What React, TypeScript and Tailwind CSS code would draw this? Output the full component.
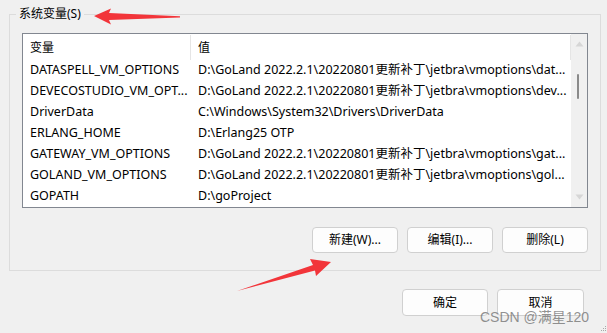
import React from "react";

const rows: [string, string][] = [
  ["DATASPELL_VM_OPTIONS", "D:\\GoLand 2022.2.1\\20220801更新补丁\\jetbra\\vmoptions\\dat..."],
  ["DEVECOSTUDIO_VM_OPT...", "D:\\GoLand 2022.2.1\\20220801更新补丁\\jetbra\\vmoptions\\dev..."],
  ["DriverData", "C:\\Windows\\System32\\Drivers\\DriverData"],
  ["ERLANG_HOME", "D:\\Erlang25 OTP"],
  ["GATEWAY_VM_OPTIONS", "D:\\GoLand 2022.2.1\\20220801更新补丁\\jetbra\\vmoptions\\gat..."],
  ["GOLAND_VM_OPTIONS", "D:\\GoLand 2022.2.1\\20220801更新补丁\\jetbra\\vmoptions\\gol..."],
  ["GOPATH", "D:\\goProject"],
];

function Btn({ label, w = "w-[86px]", h = "h-[26px]" }: { label: string; w?: string; h?: string }) {
  return (
    <div
      className={`${w} ${h} flex items-center justify-center rounded-[4px] border border-[#d0d0d0] bg-[#fdfdfd] text-[12px] text-black`}
    >
      {label}
    </div>
  );
}

export default function App() {
  return (
    <div
      className="relative w-[607px] h-[333px] overflow-hidden bg-[#f0f0f0] text-[12px] text-black"
      style={{ fontFamily: '"Noto Sans", "Noto Sans CJK SC", sans-serif' }}
    >
      <div className="pl-[9px] pt-[14px]">
        {/* group box */}
        <div className="relative w-[592px] h-[257px] border border-[#dcdcdc] pl-[12px] pr-[12px] pt-[18px]">
          <div className="absolute left-[6px] top-[-9px] bg-[#f0f0f0] px-[3px] leading-[16px] text-[12px]">
            系统变量(S)
          </div>
          {/* list box */}
          <div className="w-[566px] h-[175px] border border-[#828790] bg-white flex">
            <div className="flex-1 min-w-0 flex flex-col text-[12.5px] pt-[1px] overflow-hidden">
              <div className="h-[25px] flex items-center shrink-0 text-[12px]">
                <div className="w-[168px] pl-[7px] h-full flex items-center border-r border-[#e5e5e5]">变量</div>
                <div className="flex-1 pl-[7px] h-full flex items-center border-r border-[#e5e5e5]">值</div>
              </div>
              {rows.map(([k, v]) => (
                <div key={k} className="h-[21px] flex items-center shrink-0 whitespace-nowrap">
                  <div className="w-[168px] pl-[7px] overflow-hidden">{k}</div>
                  <div className="flex-1 pl-[7px] overflow-hidden">{v}</div>
                </div>
              ))}
            </div>
            {/* scrollbar */}
            <div className="w-[16px] h-full bg-[#f0f0f0] flex flex-col items-center justify-between py-[7px]">
              <svg width="9" height="6" viewBox="0 0 9 6">
                <polygon points="4.5,0.5 8.5,5.5 0.5,5.5" fill="#d6d6d6" />
              </svg>
              <div className="flex-1 w-full relative">
                <div className="absolute left-[6px] top-[27px] w-[2px] h-[25px] bg-[#8a8a8a] rounded-[1px]" />
              </div>
              <svg width="9" height="6" viewBox="0 0 9 6">
                <polygon points="0.5,0.5 8.5,0.5 4.5,5.5" fill="#d6d6d6" />
              </svg>
            </div>
          </div>
          {/* buttons */}
          <div className="mt-[19px] flex justify-end gap-[9px]">
            <Btn label="新建(W)..." />
            <Btn label="编辑(I)..." />
            <Btn label="删除(L)" />
          </div>
        </div>
      </div>
      {/* bottom buttons */}
      <div className="mt-[18px] pr-[23px] flex justify-end gap-[9px]">
        <Btn label="确定" w="w-[86px]" h="h-[27px]" />
        <Btn label="取消" w="w-[87px]" h="h-[27px]" />
      </div>

      {/* annotations */}
      <svg className="absolute left-0 top-0 pointer-events-none" width="607" height="333">
        <polygon points="94,16 111,8.5 109,13 180,16.3 180,17.6 109,20 111,24.5" fill="#f2353a" />
        <polygon points="237,291 313,265 310,259 331,262 316,276 315,270.5" fill="#f2353a" />
        <g fill="#a8a8a8">
          <rect x="603" y="328" width="1" height="1" />
          <rect x="605" y="326" width="1" height="1" />
          <rect x="605" y="328" width="1" height="1" />
          <rect x="603" y="330" width="1" height="1" />
          <rect x="605" y="330" width="1" height="1" />
          <rect x="601" y="330" width="1" height="1" />
        </g>
      </svg>
      <div
        className="absolute left-[480px] top-[308px] text-[14px] leading-[18px] text-[rgba(110,110,110,0.75)] whitespace-nowrap pointer-events-none"
        style={{ fontFamily: '"Liberation Sans", "Noto Sans CJK SC", sans-serif' }}
      >
        CSDN @满星120
      </div>
    </div>
  );
}
